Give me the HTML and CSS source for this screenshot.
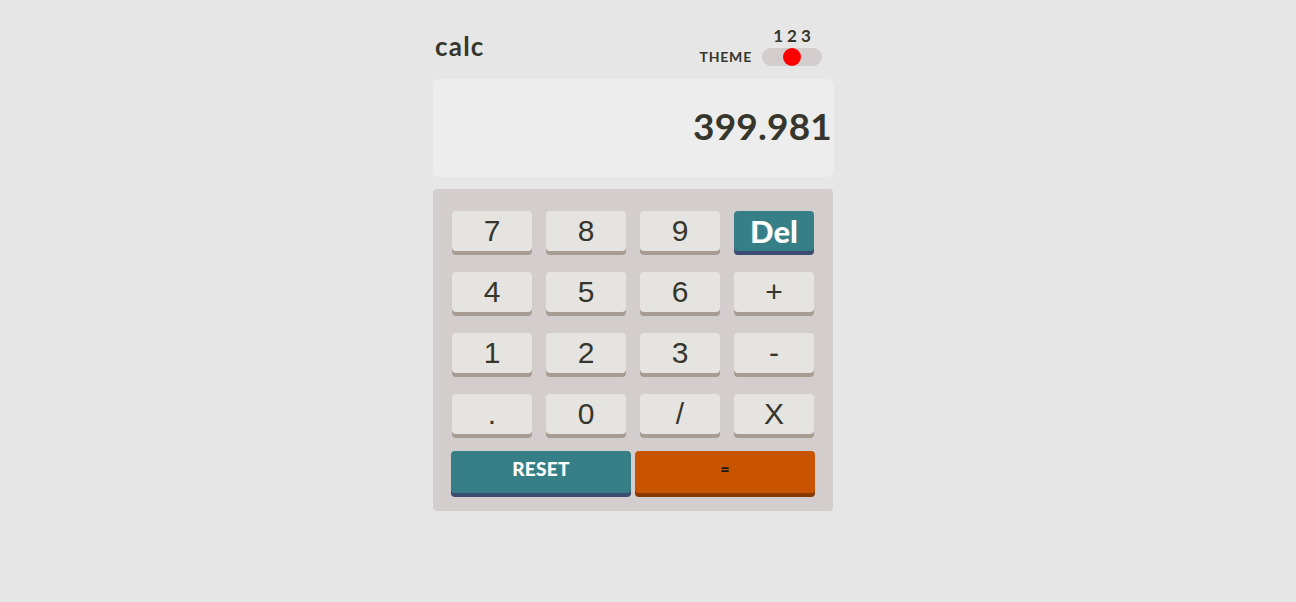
FILE: index.html
```html
<!DOCTYPE html>
<html>
<head>
<meta charset="utf-8">
<link rel="stylesheet" href="styles.css">
</head>
<body>
<main class="calc">
  <header class="top">
    <h1 class="logo">calc</h1>
    <div class="theme">
      <span class="theme-label">THEME</span>
      <div class="switch">
        <div class="nums"><span>1</span><span>2</span><span>3</span></div>
        <div class="track"><span class="knob"></span></div>
      </div>
    </div>
  </header>
  <section class="screen">399.981</section>
  <section class="pad">
    <div class="grid">
      <button class="key">7</button>
      <button class="key">8</button>
      <button class="key">9</button>
      <button class="key del">Del</button>
      <button class="key">4</button>
      <button class="key">5</button>
      <button class="key">6</button>
      <button class="key">+</button>
      <button class="key">1</button>
      <button class="key">2</button>
      <button class="key">3</button>
      <button class="key">-</button>
      <button class="key">.</button>
      <button class="key">0</button>
      <button class="key">/</button>
      <button class="key">X</button>
    </div>
    <div class="bottom">
      <button class="wide reset">RESET</button>
      <button class="wide equals">=</button>
    </div>
  </section>
</main>
</body>
</html>
```
FILE: styles.css
```css
* { box-sizing: border-box; }
html, body { margin: 0; padding: 0; }
body {
  background: #e6e6e6;
  font-family: "Lato", "Liberation Sans", sans-serif;
  color: #36362c;
}
.calc {
  width: 430px;
  margin: 0 auto;
  padding-top: 27px;
}
.top {
  width: 401px;
  height: 52px;
  display: flex;
  justify-content: space-between;
  align-items: flex-start;
}
.logo {
  margin: 4px 0 0 2px;
  font-size: 26px;
  font-weight: 700;
  line-height: 30px;
  letter-spacing: 1.2px;
}
.theme {
  display: flex;
  align-items: flex-end;
  margin-right: 12px;
}
.theme-label {
  font-size: 14px;
  font-weight: 700;
  letter-spacing: 0.8px;
  margin-right: 10px;
  margin-bottom: 1px;
}
.switch {
  display: flex;
  flex-direction: column;
  align-items: center;
  width: 60px;
}
.nums {
  display: flex;
  gap: 4px;
  font-size: 17px;
  font-weight: 700;
  line-height: 18px;
  margin-bottom: 3px;
}
.track {
  width: 60px;
  height: 18px;
  border-radius: 9px;
  background: #d3cdcd;
  display: flex;
  align-items: center;
  justify-content: center;
}
.knob {
  width: 18px;
  height: 18px;
  border-radius: 50%;
  background: #ff0000;
}
.screen {
  width: 401px;
  height: 98px;
  background: #ededed;
  border-radius: 6px;
  display: flex;
  align-items: center;
  justify-content: flex-end;
  padding-right: 2px;
  padding-bottom: 6px;
  font-size: 37px;
  font-weight: 700;
  letter-spacing: 0.2px;
  color: #36362c;
}
.pad {
  width: 400px;
  margin-top: 12px;
  background: #d3cdcd;
  border-radius: 4px;
  padding: 22px 18px 18px 18px;
}
.grid {
  display: grid;
  grid-template-columns: repeat(4, 80px);
  column-gap: 14px;
  row-gap: 17px;
  padding-left: 1px;
}
button { font: inherit; border: 0; cursor: pointer; padding: 0; }
.key {
  height: 40px;
  margin-bottom: 4px;
  background: #e6e4e1;
  border-radius: 4px;
  box-shadow: 0 4px 0 #a69c91;
  font-family: "Liberation Sans", Arial, sans-serif;
  font-size: 30px;
  line-height: 40px;
  color: #36362c;
}
.key.del {
  background: #377f86;
  box-shadow: 0 4px 0 #3b4d70;
  color: #ffffff;
  font-family: "Lato", sans-serif;
  font-weight: 900;
  font-size: 31px;
  line-height: 36px;
}
.bottom {
  display: flex;
  gap: 4px;
  margin-top: 13px;
}
.wide {
  width: 180px;
  height: 42px;
  border-radius: 4px;
  font-weight: 900;
}
.reset {
  background: #377f86;
  box-shadow: 0 4px 0 #3b4d70;
  color: #ffffff;
  font-size: 19px;
  letter-spacing: 0.3px;
  padding-bottom: 7px;
}
.equals {
  background: #c85401;
  box-shadow: 0 4px 0 #873901;
  color: #1a1a1a;
  font-size: 16px;
  padding-bottom: 7px;
}
```
